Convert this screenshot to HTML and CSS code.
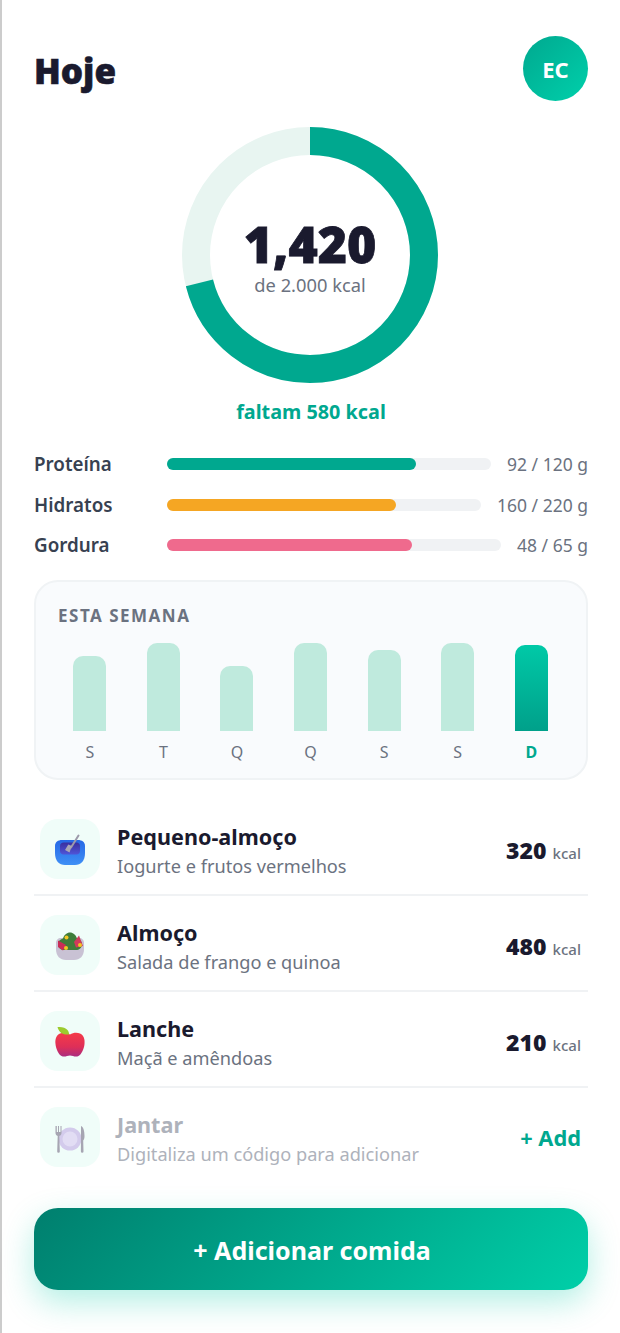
FILE: index.html
```html
<!DOCTYPE html>
<html lang="pt">
<head>
    <meta charset="UTF-8">
    <title>Hoje</title>
    <link rel="stylesheet" href="styles.css">
</head>
<body>

<main class="page">
    <header class="top">
        <h1>Hoje</h1>
        <div class="avatar">EC</div>
    </header>

    <section class="ring-wrap">
        <div class="ring">
            <svg width="256" height="256" viewBox="0 0 256 256">
                <circle class="ring-track" cx="128" cy="128" r="114"/>
                <circle class="ring-fill" cx="128" cy="128" r="114" transform="rotate(-90 128 128)"/>
            </svg>
            <div class="ring-text">
                <div class="ring-num">1,420</div>
                <div class="ring-sub">de 2.000 kcal</div>
            </div>
        </div>
        <div class="left-note">faltam 580 kcal</div>
    </section>

    <section class="macros">
        <div class="macro">
            <span class="macro-name">Proteína</span>
            <div class="track"><div class="fill fill-green" style="width:77%"></div></div>
            <span class="macro-val">92 / 120 g</span>
        </div>
        <div class="macro">
            <span class="macro-name">Hidratos</span>
            <div class="track"><div class="fill fill-orange" style="width:72.9%"></div></div>
            <span class="macro-val">160 / 220 g</span>
        </div>
        <div class="macro">
            <span class="macro-name">Gordura</span>
            <div class="track"><div class="fill fill-pink" style="width:73.2%"></div></div>
            <span class="macro-val">48 / 65 g</span>
        </div>
    </section>

    <section class="week">
        <h2>ESTA SEMANA</h2>
        <div class="chart">
            <div class="day"><div class="slot"><div class="bar" style="height:75px"></div></div><span>S</span></div>
            <div class="day"><div class="slot"><div class="bar" style="height:88px"></div></div><span>T</span></div>
            <div class="day"><div class="slot"><div class="bar" style="height:65px"></div></div><span>Q</span></div>
            <div class="day"><div class="slot"><div class="bar" style="height:88px"></div></div><span>Q</span></div>
            <div class="day"><div class="slot"><div class="bar" style="height:81px"></div></div><span>S</span></div>
            <div class="day"><div class="slot"><div class="bar" style="height:88px"></div></div><span>S</span></div>
            <div class="day today"><div class="slot"><div class="bar" style="height:86px"></div></div><span>D</span></div>
        </div>
    </section>

    <section class="meals">
        <div class="meal">
            <div class="meal-icon">
                <svg width="32" height="32" viewBox="0 0 32 32">
                    <defs>
                        <linearGradient id="bowl" x1="0" y1="0" x2="0" y2="1">
                            <stop offset="0" stop-color="#2668e6"/>
                            <stop offset="1" stop-color="#3f90f5"/>
                        </linearGradient>
                        <linearGradient id="bowl-in" x1="0" y1="0" x2="0" y2="1">
                            <stop offset="0" stop-color="#3a2f9e"/>
                            <stop offset="1" stop-color="#4f55d8"/>
                        </linearGradient>
                    </defs>
                    <path d="M1 13C1 9 4 7 8 7h16c4 0 7 2 7 6v7c0 8-4 12-10 12H11C5 32 1 28 1 20z" fill="url(#bowl)"/>
                    <path d="M6 13c0-2 1.500-3.500 3.500-3.500h13c2 0 3.500 1.500 3.500 3.500v5c0 2-1.500 3.500-3.500 3.500h-13C7.500 21.500 6 20 6 18z" fill="url(#bowl-in)"/>
                    <path d="M24.500 2.500L17 14.500" stroke="#9d9aab" stroke-width="2" stroke-linecap="round"/>
                    <path d="M17.800 13l-2.300 6.500-4.500-2.500 3.300-5.500z" fill="#a9a6b5"/>
                </svg>
            </div>
            <div class="meal-text">
                <div class="meal-name">Pequeno-almoço</div>
                <div class="meal-sub">Iogurte e frutos vermelhos</div>
            </div>
            <div class="meal-val"><b>320</b> <small>kcal</small></div>
        </div>
        <div class="meal">
            <div class="meal-icon">
                <svg width="32" height="32" viewBox="0 0 32 32">
                    <path d="M2 14c0-3 2-5 5-5h18c3 0 5 2 5 5v6c0 7-4 11-10 11h-8C6 31 2 27 2 20z" fill="#c9c2d4"/>
                    <path d="M4 15c0-3 3-5 5-5.500C10 6 13 3.500 16 3.500s6 2.500 7 6c2 .5 5 2.500 5 5.500 0 4-3 6-6 6H10c-3 0-6-2-6-6z" fill="#3f7d3a"/>
                    <path d="M4 11.500l8 4.500-3 5.500-5-3.500z" fill="#c92c56"/>
                    <path d="M25 6.500l4 10.500-7 1.500-2-5.500z" fill="#d03a5c"/>
                    <circle cx="12.500" cy="8.500" r="2" fill="#f3c623"/>
                    <circle cx="26" cy="16" r="2" fill="#f3c623"/>
                    <circle cx="12" cy="19" r="2" fill="#f3c623"/>
                </svg>
            </div>
            <div class="meal-text">
                <div class="meal-name">Almoço</div>
                <div class="meal-sub">Salada de frango e quinoa</div>
            </div>
            <div class="meal-val"><b>480</b> <small>kcal</small></div>
        </div>
        <div class="meal">
            <div class="meal-icon">
                <svg width="32" height="32" viewBox="0 0 32 32">
                    <defs>
                        <linearGradient id="apple" x1="0" y1="0" x2="0" y2="1">
                            <stop offset="0" stop-color="#f53b48"/>
                            <stop offset=".6" stop-color="#de2f58"/>
                            <stop offset="1" stop-color="#a92d80"/>
                        </linearGradient>
                    </defs>
                    <path d="M16 9.500c3-2 7-2.500 10-1 4 2 5 6 4.500 10.500-.5 5-3 10.500-6 12-2 1-4 .5-5.500 0-2-.7-4-.7-6 0-1.500.5-3.500 1-5.500 0-3-1.500-5.500-7-6-12C1 14.500 2 10.500 6 8.500c3-1.500 7-1 10 1z" fill="url(#apple)"/>
                    <path d="M3.500 2c4-.5 8 .5 10 3 1 1.300 1.500 2.800 1.700 4.500-4 .3-7.200-.5-9-2.500C5 5.700 4 4 3.500 2z" fill="#9ccb2e"/>
                </svg>
            </div>
            <div class="meal-text">
                <div class="meal-name">Lanche</div>
                <div class="meal-sub">Maçã e amêndoas</div>
            </div>
            <div class="meal-val"><b>210</b> <small>kcal</small></div>
        </div>
        <div class="meal meal-empty">
            <div class="meal-icon">
                <svg width="32" height="32" viewBox="0 0 32 32">
                    <g transform="translate(0 3)">
                        <circle cx="16" cy="15" r="11.500" fill="#cfc3ea"/>
                        <circle cx="16" cy="15" r="7.500" fill="#e0d8f4"/>
                        <path d="M1.500 2v7c0 1.500 1 2.500 2.200 3l-.5 15.500a1.300 1.300 0 0 0 2.600 0L5.300 12c1.200-.5 2.200-1.500 2.200-3V2l-1 0v6H5V2H4v6H2.800V2z" fill="#9a96a6"/>
                        <path d="M27 2c2.500 1 3.500 5 3.500 10 0 2-.5 3.500-1.300 4.500l.3 11a1.300 1.300 0 0 1-2.600 0z" fill="#9a96a6"/>
                    </g>
                </svg>
            </div>
            <div class="meal-text">
                <div class="meal-name">Jantar</div>
                <div class="meal-sub">Digitaliza um código para adicionar</div>
            </div>
            <div class="meal-add">+ Add</div>
        </div>
    </section>

    <button class="add-btn">+ Adicionar comida</button>
</main>

</body>
</html>
```

FILE: styles.css
```css
* {
    box-sizing: border-box;
}
html, body {
    margin: 0;
    height: 100%;
}
body {
    background: #fff;
    color: #1a1a2e;
    font-family: "Noto Sans", "Open Sans", sans-serif;
    overflow: hidden;
}
.page {
    height: 1333px;
    border-left: 2px solid #ccc;
    padding: 36px 32px 0;
}

/* header */
.top {
    display: flex;
    justify-content: space-between;
    align-items: flex-start;
}
h1 {
    margin: 0;
    height: 65px;
    font-size: 35px;
    font-weight: 900;
    line-height: 70px;
    -webkit-text-stroke: .6px #1a1a2e;
}
.avatar {
    width: 65px;
    height: 65px;
    border-radius: 50%;
    display: flex;
    justify-content: center;
    align-items: center;
    background: linear-gradient(135deg, #00a88f, #00d0ab);
    color: #fff;
    font-size: 22px;
    font-weight: 700;
}

/* calories ring */
.ring-wrap {
    margin-top: 26px;
    display: flex;
    flex-direction: column;
    align-items: center;
}
.ring {
    position: relative;
    width: 256px;
    height: 256px;
    margin-left: -2px;
}
.ring svg {
    display: block;
}
.ring circle {
    fill: none;
    stroke-width: 28;
}
.ring-track {
    stroke: #e8f5f1;
}
.ring-fill {
    stroke: #00a88f;
    stroke-dasharray: 508.6 716.3;
}
.ring-text {
    position: absolute;
    top: 0;
    left: 0;
    right: 0;
    bottom: 0;
    padding-top: 3px;
    display: flex;
    flex-direction: column;
    justify-content: center;
    align-items: center;
    text-align: center;
}
.ring-num {
    font-size: 50px;
    font-weight: 900;
    line-height: 56px;
    -webkit-text-stroke: .8px #1a1a2e;
}
.ring-sub {
    margin-top: 1px;
    font-size: 18.3px;
    line-height: 24px;
    color: #6b7280;
}
.left-note {
    margin-top: 16px;
    font-size: 19.8px;
    font-weight: 700;
    line-height: 26px;
    color: #00a88f;
}

/* macros */
.macros {
    margin-top: 19px;
}
.macro {
    display: flex;
    align-items: center;
    height: 40.5px;
    gap: 16px;
}
.macro-name {
    width: 117px;
    font-size: 18.8px;
    font-weight: 600;
    color: #374151;
}
.macro-val {
    font-size: 17.5px;
    color: #6b7280;
}
.track {
    flex: 1;
    height: 12px;
    border-radius: 6px;
    background: #f0f2f4;
}
.fill {
    height: 100%;
    border-radius: 6px;
}
.fill-green {
    background: #00a88f;
}
.fill-orange {
    background: #f5a623;
}
.fill-pink {
    background: #ef6a8d;
}

/* week chart */
.week {
    margin-top: 14.5px;
    height: 200px;
    padding: 22px;
    border: 2px solid #f0f3f5;
    border-radius: 24px;
    background: #f9fbfd;
}
h2 {
    margin: 0;
    font-size: 17px;
    font-weight: 700;
    line-height: 24px;
    letter-spacing: 1.5px;
    color: #6b7280;
}
.chart {
    display: flex;
    gap: 10px;
    margin: 15px 1px 0 0;
}
.day {
    flex: 1;
    display: flex;
    flex-direction: column;
    align-items: center;
    font-size: 16px;
    color: #6b7280;
}
.slot {
    width: 33px;
    height: 88px;
    display: flex;
    align-items: flex-end;
}
.bar {
    width: 100%;
    border-radius: 10px 10px 0 0;
    background: #bfeadd;
}
.day span {
    margin-top: 11px;
    line-height: 20px;
}
.today .bar {
    background: linear-gradient(180deg, #00c9a7, #00a08a);
}
.today span {
    font-weight: 700;
    color: #00a88f;
}

/* meals */
.meals {
    margin-top: 20px;
}
.meal {
    display: flex;
    align-items: center;
    height: 96px;
    padding: 19px 7px 15px 6px;
    gap: 17px;
    border-bottom: 2px solid #f0f2f4;
}
.meal:last-child {
    border-bottom-color: transparent;
}
.meal-icon {
    width: 60px;
    height: 60px;
    flex-shrink: 0;
    display: flex;
    justify-content: center;
    align-items: center;
    border-radius: 18px;
    background: #f0fdf9;
}
.meal-text {
    flex: 1;
    padding-top: 2px;
}
.meal-name {
    font-size: 21.6px;
    font-weight: 700;
    line-height: 30px;
}
.meal-sub {
    margin-top: 1px;
    font-size: 18.2px;
    line-height: 26px;
    color: #6b7280;
}
.meal-val {
    margin-top: 1px;
}
.meal-val b {
    font-size: 23px;
    font-weight: 900;
}
.meal-val small {
    margin-left: 2px;
    font-size: 15px;
    font-weight: 500;
    color: #6b7280;
}
.meal-add {
    font-size: 21.8px;
    font-weight: 700;
    color: #00a88f;
}
.meal-empty .meal-name,
.meal-empty .meal-sub {
    color: #aeb2bb;
}
.meal-empty svg {
    opacity: .85;
}

/* main button */
.add-btn {
    display: block;
    width: 100%;
    height: 82px;
    margin-top: 24px;
    padding: 2px 0 0 2px;
    border: 0;
    border-radius: 24px;
    background: linear-gradient(135deg, #007f6e, #00cfa8);
    box-shadow: 0 12px 32px rgba(0, 201, 167, .3);
    color: #fff;
    font-family: inherit;
    font-size: 25px;
    font-weight: 700;
}
```
